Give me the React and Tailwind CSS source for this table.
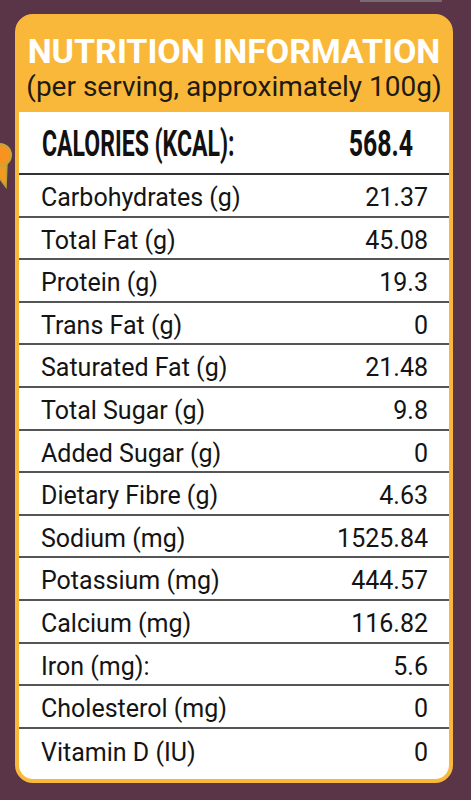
import React from "react";

const rows = [
  ["Carbohydrates (g)", "21.37"],
  ["Total Fat (g)", "45.08"],
  ["Protein (g)", "19.3"],
  ["Trans Fat (g)", "0"],
  ["Saturated Fat (g)", "21.48"],
  ["Total Sugar (g)", "9.8"],
  ["Added Sugar (g)", "0"],
  ["Dietary Fibre (g)", "4.63"],
  ["Sodium (mg)", "1525.84"],
  ["Potassium (mg)", "444.57"],
  ["Calcium (mg)", "116.82"],
  ["Iron (mg):", "5.6"],
  ["Cholesterol (mg)", "0"],
  ["Vitamin D (IU)", "0"],
];

export default function App() {
  return (
    <div
      className="relative w-[471px] h-[800px] overflow-hidden bg-[#5a3447] pt-[14px] pl-[15px]"
      style={{ fontFamily: "Roboto, 'Liberation Sans', sans-serif" }}
    >
      <div className="absolute top-0 left-[360px] w-[82px] h-[2px] bg-[#7a6a72]" />
      <svg className="absolute left-[-10px] top-[140px]" width="24" height="50" viewBox="0 0 24 50">
        <path d="M5 22 L3 45 L10 39 L16 47 L17 24 Z" fill="#f29a1f" stroke="#b8a03a" strokeWidth="1.5" />
        <circle cx="10" cy="15" r="11" fill="#f7931e" stroke="#c2a83c" strokeWidth="2" />
      </svg>
      <div className="w-[438px] h-[769px] rounded-[18px] bg-[#fab83b] border-[4px] border-[#fab83b] flex flex-col">
        <div className="h-[94px] flex flex-col items-center">
          <div className="text-white font-bold text-[34px] leading-none mt-[16px] whitespace-nowrap">
            NUTRITION INFORMATION
          </div>
          <div className="text-[#1e1a14] text-[28px] leading-none mt-[5px] whitespace-nowrap">
            (per serving, approximately 100g)
          </div>
        </div>
        <div className="flex-1 bg-white rounded-b-[14px] flex flex-col">
          <div className="h-[63px] flex items-center justify-between border-b-2 border-[#333] pl-[23px] pr-[36px] pt-[2px]">
            <div className="w-[200px] flex">
              <span className="inline-block font-bold text-[36px] leading-none text-[#111] origin-left scale-x-[0.64] whitespace-nowrap">
                CALORIES (KCAL):
              </span>
            </div>
            <div className="w-[80px] flex justify-end">
              <span className="inline-block font-bold text-[36px] leading-none text-[#111] origin-right scale-x-[0.69] whitespace-nowrap">
                568.4
              </span>
            </div>
          </div>
          {rows.map(([label, value], i) => (
            <div
              key={label}
              className={
                i < rows.length - 1
                  ? "h-[42.6px] flex items-center justify-between pl-[22px] pr-[21px] pt-[5px] border-b-2 border-[#555] text-[25px] text-[#141414]"
                  : "h-[42.6px] flex items-center justify-between pl-[22px] pr-[21px] pt-[5px] text-[25px] text-[#141414]"
              }
            >
              <span className="whitespace-nowrap">{label}</span>
              <span className="whitespace-nowrap">{value}</span>
            </div>
          ))}
        </div>
      </div>
    </div>
  );
}
